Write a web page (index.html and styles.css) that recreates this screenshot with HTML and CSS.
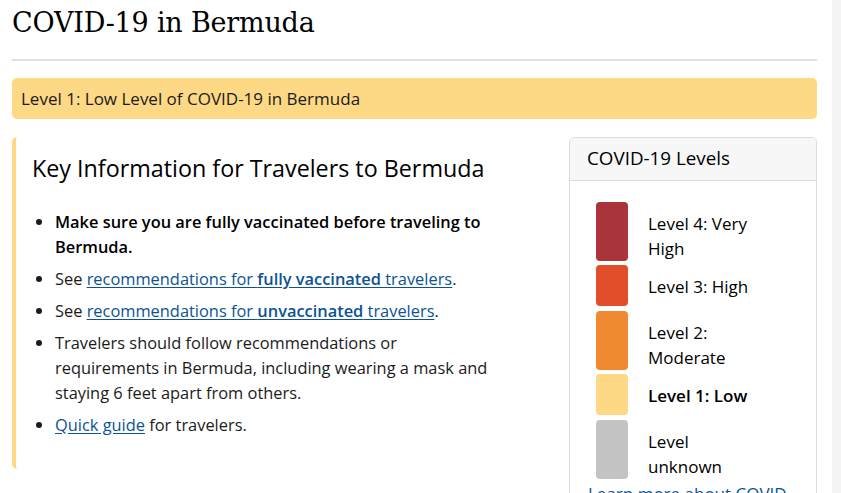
FILE: index.html
```html
<!DOCTYPE html>
<html lang="en">
  <head>
    <meta charset="UTF-8">
    <meta name="viewport" content="width=device-width, initial-scale=1.0">
    <title>COVID-19 in Bermuda</title>
    <link rel="stylesheet" href="styles.css">
  </head>
  <body>
    <main class="page">
      <h1 class="page-title">COVID-19 in Bermuda</h1>
      <hr class="divider">

      <div class="level-alert">Level 1: Low Level of COVID-19 in Bermuda</div>

      <div class="columns">
        <section class="key-info">
          <h2>Key Information for Travelers to Bermuda</h2>
          <ul>
            <li><strong>Make sure you are fully vaccinated before traveling to Bermuda.</strong></li>
            <li>See <a href="#">recommendations for <strong>fully vaccinated</strong> travelers</a>.</li>
            <li>See <a href="#">recommendations for <strong>unvaccinated</strong> travelers</a>.</li>
            <li>Travelers should follow recommendations or requirements in Bermuda, including wearing a mask and staying 6 feet apart from others.</li>
            <li><a href="#">Quick guide</a> for travelers.</li>
          </ul>
        </section>

        <aside class="levels-card">
          <div class="levels-header">COVID-19 Levels</div>
          <div class="levels-body">
            <div class="level-row">
              <span class="swatch level-4"></span>
              <span class="level-text">Level 4: Very High</span>
            </div>
            <div class="level-row">
              <span class="swatch level-3"></span>
              <span class="level-text">Level 3: High</span>
            </div>
            <div class="level-row">
              <span class="swatch level-2"></span>
              <span class="level-text">Level 2: Moderate</span>
            </div>
            <div class="level-row">
              <span class="swatch level-1"></span>
              <span class="level-text current">Level 1: Low</span>
            </div>
            <div class="level-row">
              <span class="swatch level-unknown"></span>
              <span class="level-text">Level unknown</span>
            </div>
            <a class="levels-link" href="#">Learn more about COVID-19 Travel Health Notice Levels</a>
          </div>
        </aside>
      </div>
    </main>
    <div class="side-strip"></div>
  </body>
</html>
```

FILE: styles.css
```css
html, body {
  margin: 0;
  padding: 0;
  height: 100%;
}

body {
  display: flex;
  font-family: "Open Sans", "Noto Sans", sans-serif;
  font-size: 17px;
  line-height: 25.5px;
  color: #1b1b1b;
  background-color: #fff;
  overflow: hidden;
}

.page {
  flex: 1;
  padding: 0 15px 0 12px;
}

.side-strip {
  width: 9px;
  background-color: #f4f4f4;
}

.page-title {
  font-family: "DejaVu Serif", "Liberation Serif", serif;
  font-weight: normal;
  font-size: 27px;
  line-height: 34px;
  color: #000;
  margin: 6px 0 19px;
  letter-spacing: -0.2px;
}

.divider {
  border: none;
  border-top: 2px solid #e0e0e0;
  margin: 0 0 17px;
}

.level-alert {
  background-color: #fdd885;
  border-radius: 5px;
  padding: 8px 8px 7.5px 9px;
  color: #1b1b1b;
}

.columns {
  display: grid;
  grid-template-columns: 1fr 248px;
  gap: 31px;
  margin-top: 18px;
}

/* left column: yellow rule + travel notes */
.key-info {
  border-left: 4px solid #fdd885;
  border-radius: 5px 0 0 5px;
  padding: 17px 45px 16px 16px;
  height: 299px;
}

.key-info h2 {
  font-size: 23.3px;
  font-weight: normal;
  line-height: 28.8px;
  color: #000;
  margin: 0 0 26px;
}

.key-info ul {
  margin: 0;
  padding-left: 23px;
  font-size: 16.4px;
  line-height: 25px;
}

.key-info li {
  margin-bottom: 7px;
}

.key-info strong {
  font-weight: 600;
  color: #000;
}

a {
  color: #0b5394;
  text-decoration: underline;
  text-underline-offset: 2px;
}

.key-info a strong {
  color: #0b5394;
}

/* right column: levels legend */
.levels-card {
  border: 1px solid #dcdcdc;
  border-radius: 5px;
  height: 420px;
  overflow: hidden;
}

.levels-header {
  background-color: #f7f7f7;
  border-bottom: 1px solid #dcdcdc;
  font-size: 18.8px;
  padding: 8px 17px 8px;
  color: #000;
}

.levels-body {
  padding: 21px 18px 0;
}

.level-row {
  display: flex;
  gap: 20px;
  min-height: 41px;
  margin: 0 0 4.5px 8px;
}

.swatch {
  flex: 0 0 32px;
  border-radius: 4px;
}

.level-4 { background-color: #a93439; }
.level-3 { background-color: #e34e2a; }
.level-2 { background-color: #f08a31; }
.level-1 { background-color: #fdd885; }
.level-unknown { background-color: #c4c4c4; }

.level-text {
  width: 108px;
  padding-top: 9px;
  line-height: 25px;
  color: #000;
}

.level-text.current {
  font-weight: 600;
}

.levels-link {
  display: block;
  margin-top: -2px;
  line-height: 25px;
}
```
